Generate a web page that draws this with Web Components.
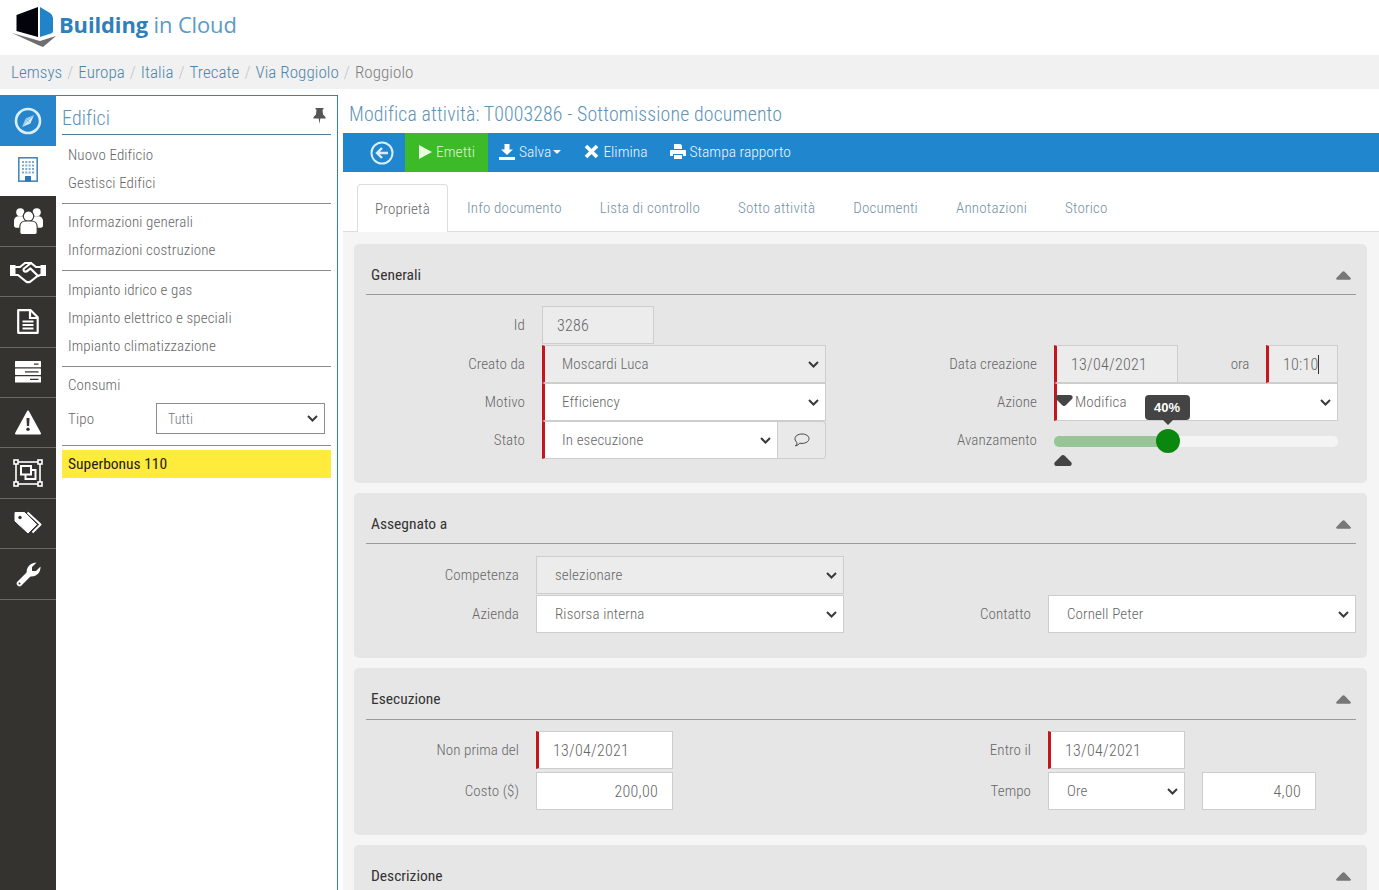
<!DOCTYPE html>
<html lang="it"><head><meta charset="utf-8"><title>Building in Cloud</title>
<style>
html,body{margin:0;padding:0;height:890px;overflow:hidden;background:#fff}
body{font-family:"Liberation Sans Narrow","Roboto Condensed","DejaVu Sans Condensed","Liberation Sans",sans-serif;font-size:15px;color:#666;font-weight:300}
</style></head><body>
<bic-header></bic-header>
<bic-breadcrumb></bic-breadcrumb>
<bic-shell>
  <bic-rail slot="rail"></bic-rail>
  <bic-panel slot="panel"></bic-panel>
  <div slot="main" style="display:contents">
    <bic-titlebar>Modifica attività: T0003286 - Sottomissione documento</bic-titlebar>
    <bic-toolbar></bic-toolbar>
    <bic-tabs></bic-tabs>
    <bic-content>
      <bic-card heading="Generali" bottom="24">
        <bic-form cols="188px 284px 228px 284px" rows="39px 38px 38px 38px">
          <bic-label>Id</bic-label>
          <bic-field ro num date style="width:112px">3286</bic-field>
          <div style="grid-column:3 / 5"></div>
          <bic-label>Creato da</bic-label>
          <bic-field ro req select>Moscardi Luca</bic-field>
          <bic-label>Data creazione</bic-label>
          <bic-timegroup></bic-timegroup>
          <bic-label>Motivo</bic-label>
          <bic-field req select>Efficiency</bic-field>
          <bic-label>Azione</bic-label>
          <bic-field req select pin>Modifica</bic-field>
          <bic-label>Stato</bic-label>
          <bic-statefield></bic-statefield>
          <bic-label>Avanzamento</bic-label>
          <bic-slider value="40"></bic-slider>
        </bic-form>
      </bic-card>
      <bic-card heading="Assegnato a" bottom="25" gap="12">
        <bic-form cols="182px 308px 204px 308px" rows="39px 38px">
          <bic-label>Competenza</bic-label>
          <bic-field ro select>selezionare</bic-field>
          <div style="grid-column:3 / 5"></div>
          <bic-label>Azienda</bic-label>
          <bic-field select>Risorsa interna</bic-field>
          <bic-label>Contatto</bic-label>
          <bic-field select>Cornell Peter</bic-field>
        </bic-form>
      </bic-card>
      <bic-card heading="Esecuzione" bottom="25" head="52">
        <bic-form cols="182px 137px 375px 137px 17px 114px" rows="41px 38px">
          <bic-label>Non prima del</bic-label>
          <bic-field req num date>13/04/2021</bic-field>
          <bic-label>Entro il</bic-label>
          <bic-field req num date>13/04/2021</bic-field>
          <div style="grid-column:5 / 7"></div>
          <bic-label>Costo ($)</bic-label>
          <bic-field right num>200,00</bic-field>
          <bic-label>Tempo</bic-label>
          <bic-field select>Ore</bic-field>
          <div></div>
          <bic-field right num>4,00</bic-field>
        </bic-form>
      </bic-card>
      <bic-card heading="Descrizione" bottom="25"></bic-card>
    </bic-content>
  </div>
</bic-shell>
<script>
const def=(name,html)=>{
  customElements.define(name,class extends HTMLElement{
    connectedCallback(){
      if(this.shadowRoot)return;
      const r=this.attachShadow({mode:'open'});
      r.innerHTML=typeof html==='function'?html(this):html;
    }
  });
};
const chev=`<svg width="11" height="7" viewBox="0 0 11 7" fill="none" stroke="#3a3a3a" stroke-width="2"><path d="M1 1l4.500 4.500L10 1"/></svg>`;

def('bic-header',`<style>
:host{display:flex;align-items:flex-start;height:55px;background:#fff}
svg{margin:5px 0 0 12px;flex:none}
.t{margin:11px 0 0 1px;font:400 21.900px/27px "Open Sans",sans-serif;color:#5a9ac4;letter-spacing:-.1px}
b{font-weight:700;color:#2f80b8}
</style>
<svg width="46" height="43" viewBox="12 5 46 43">
<path d="M12 33L40 41 56 36 43 47 38 45z" fill="#6e6e6e"/>
<path d="M16.500 15L38 7V37L16.500 31z" fill="#03030c"/>
<path d="M40 7L50 13Q53 15 53 18V31Q53 33 51 33.500L40 37z" fill="#2283c8"/>
</svg>
<div class="t"><b>Building</b> in Cloud</div>`);

def('bic-breadcrumb',`<style>
:host{display:flex;align-items:center;height:34px;background:#f1f1f1;padding-left:11px;font-size:17px;color:#4f86a8;box-sizing:border-box;letter-spacing:.05px}
i{font-style:normal;color:#c4c4c4;margin:0 5px}
span.l{color:#7d7d7d}
</style><span>Lemsys</span><i>/</i><span>Europa</span><i>/</i><span>Italia</span><i>/</i><span>Trecate</span><i>/</i><span>Via Roggiolo</span><i>/</i><span class="l">Roggiolo</span>`);

def('bic-shell',`<style>
:host{display:flex;height:795px;margin-top:6px;overflow:hidden}
.main{flex:1;min-width:0;margin-left:5px;display:flex;flex-direction:column}
</style><slot name="rail"></slot><slot name="panel"></slot><div class="main"><slot name="main"></slot></div>`);

const I={
compass:`<svg width="28" height="28" viewBox="0 0 28 28"><circle cx="14" cy="14" r="12" fill="none" stroke="#d9eefa" stroke-width="2.600"/><path d="M20 8l-3.600 8.400L14 14z" fill="#d9eefa"/><path d="M8 20l3.600-8.400L14 14z" fill="#9fd0ee"/><path d="M20 8l-8.400 3.600L14 14z" fill="#9fd0ee"/><path d="M8 20l8.400-3.600L14 14z" fill="#d9eefa"/></svg>`,
building:`<svg style="margin-top:-4px" width="20" height="25" viewBox="0 0 20 25"><rect x=".8" y=".8" width="18.400" height="23.400" fill="#fff" stroke="#4a87bb" stroke-width="1.600"/><g fill="#7fa9cf"><path d="M4 4h2v2H4zM7.300 4h2v2h-2zM10.600 4h2v2h-2zM14 4h2v2h-2zM4 7.500h2v2H4zM7.300 7.500h2v2h-2zM10.600 7.500h2v2h-2zM14 7.500h2v2h-2zM4 11h2v2H4zM7.300 11h2v2h-2zM10.600 11h2v2h-2zM14 11h2v2h-2zM4 14.500h2v2H4zM7.300 14.500h2v2h-2zM10.600 14.500h2v2h-2zM14 14.500h2v2h-2z"/></g><rect x="7" y="19" width="6" height="5.500" fill="#2f78b4"/></svg>`,
users:`<svg width="29" height="28" viewBox="0 0 30 28" fill="#fff"><circle cx="6.500" cy="5" r="4.200"/><circle cx="23.500" cy="5" r="4.200"/><path d="M0 19v-5c0-3 2-5 5-5h4l3 3-3 9H2c-1 0-2-1-2-2zM30 19v-5c0-3-2-5-5-5h-4l-3 3 3 9h7c1 0 2-1 2-2z"/><circle cx="15" cy="9" r="5.400" stroke="#34332f" stroke-width="1.200"/><path d="M6 26v-6c0-4 3-6 6-6h6c3 0 6 2 6 6v6c0 1.200-1 2-2 2H8c-1 0-2-.8-2-2z" stroke="#34332f" stroke-width="1.200"/></svg>`,
hands:`<svg width="36" height="25" viewBox="0 0 36 25"><rect x="0" y="6" width="5.500" height="11" fill="#fff"/><rect x="30.500" y="6" width="5.500" height="11" fill="#fff"/><g fill="none" stroke="#fff" stroke-width="2.200" stroke-linejoin="round" stroke-linecap="round"><path d="M5 8h5l5-4h6l5 4h5"/><path d="M5 16h3l8 6.500c1.600 1 3 1 4.500 0l7-5.500 3-1"/><path d="M21 4l-7 5.500c-1.200 1.700 0 3.500 2.500 3l4-3 7.500 7.500"/></g></svg>`,
doc:`<svg width="22" height="25" viewBox="0 0 22 25" fill="none" stroke="#fff" stroke-width="2.200"><path d="M1.200 1.200h12.500l7 7v15.600H1.200z" stroke-linejoin="round"/><path d="M13 1.500V9h7.500"/><path d="M5.500 12.500h11M5.500 16h11M5.500 19.500h11" stroke-width="2"/></svg>`,
server:`<svg width="26" height="22" viewBox="0 0 26 22"><g fill="#fff"><rect width="26" height="6.300" rx=".6"/><rect y="7.600" width="26" height="6.300" rx=".6"/><rect y="15.200" width="26" height="6.300" rx=".6"/></g><g stroke="#34332f" stroke-width="1.300"><path d="M19 3.200h4.500M10 10.800h13.500M15 18.300h8.500"/></g></svg>`,
warn:`<svg width="26" height="25" viewBox="0 0 26 25"><path d="M13 1.500L25 23.500H1z" fill="#fff" stroke="#fff" stroke-width="2" stroke-linejoin="round"/><path d="M11.500 8h3l-.4 8h-2.200z" fill="#34332f"/><circle cx="13" cy="19.300" r="1.700" fill="#34332f"/></svg>`,
group:`<svg width="30" height="28" viewBox="0 0 30 28" fill="none" stroke="#fff"><rect x="3" y="3" width="24" height="22" stroke-width="1.600"/><g fill="#34332f" stroke-width="1.600"><rect x="1" y="1" width="4" height="4"/><rect x="25" y="1" width="4" height="4"/><rect x="1" y="23" width="4" height="4"/><rect x="25" y="23" width="4" height="4"/></g><rect x="8" y="7" width="10" height="8.500" stroke-width="2"/><path d="M18 11h4.500v9h-10v-4.500" stroke-width="2"/></svg>`,
tags:`<svg width="28" height="24" viewBox="0 0 28 24"><path d="M1 1.500h9.500L22.500 13.500 14 22 1 10z" fill="#fff" stroke="#fff" stroke-linejoin="round"/><circle cx="6" cy="6.500" r="1.700" fill="#34332f"/><path d="M13.500 1.500l13 12-8 8" fill="none" stroke="#fff" stroke-width="2" stroke-linejoin="round"/></svg>`,
wrench:`<svg width="25" height="26" viewBox="0 0 25 26"><path d="M3.500 22.500L13 13" stroke="#fff" stroke-width="5.500" stroke-linecap="round"/><path d="M11.500 14.500C9 9.500 12 2 20.500 1.500l-4.500 4.500v4h4l4.500-4.500C25 13 18 17.500 11.500 14.500z" fill="#fff"/><circle cx="3.500" cy="22.500" r="1" fill="#34332f"/></svg>`
};
def('bic-rail',()=>`<style>
:host{display:flex;flex-direction:column;width:56px;flex:none;background:#34332f}
.i{height:50.400px;box-sizing:border-box;display:flex;align-items:center;justify-content:center;border-bottom:1px solid #6a6a66;flex:none}
.i.a{background:#2685cb;border:0;height:51px}
.i.w{background:#fff;border:0}
</style>
<div class="i a">${I.compass}</div><div class="i w">${I.building}</div>
${['users','hands','doc','server','warn','group','tags','wrench'].map(k=>`<div class="i">${I[k]}</div>`).join('')}`);

def('bic-panel',`<style>
:host{display:block;width:282px;flex:none;box-sizing:border-box;border-top:1px solid #2d82bb;border-right:1.500px solid #2d82bb;padding:0 6px;background:#fff;letter-spacing:.12px}
.h{display:flex;justify-content:space-between;height:39px;box-sizing:border-box;border-bottom:1px solid #4d7d96;font-size:20px;color:#5d93b6;line-height:44px}
.h svg{margin-top:12px;margin-right:5px}
section{border-bottom:1px solid #8b8b8b;padding:6px 0;margin:0}
section>div{height:28px;line-height:28px;padding-left:6px;color:#666}
section>.tipo{display:flex;align-items:center;padding:0 6px;height:39px;line-height:normal;margin-bottom:7px}
.tipo>span{width:88px}
.sel{width:169px;height:31px;box-sizing:border-box;border:1px solid #8d8d8d;display:flex;align-items:center;justify-content:space-between;padding:0 6px 0 11px;font-size:14px;color:#777}
.y{background:#ffeb3b;height:28px;line-height:28px;margin-top:4px;padding-left:6px;color:#222;font-size:15.500px;font-weight:400;letter-spacing:0}
</style>
<div class="h"><span>Edifici</span><svg width="13" height="16" viewBox="0 0 13 16" fill="#555"><path d="M2.500 0h8v1.500h-1l.5 5 2.500 2.500v1.500H7.300L6.500 16l-.8-5.500H.5V9L3 6.500l.5-5h-1z"/></svg></div>
<section><div>Nuovo Edificio</div><div>Gestisci Edifici</div></section>
<section style="padding-top:4px"><div>Informazioni generali</div><div>Informazioni costruzione</div></section>
<section style="padding-top:5px"><div>Impianto idrico e gas</div><div>Impianto elettrico e speciali</div><div>Impianto climatizzazione</div></section>
<section style="padding:4px 0 0"><div>Consumi</div><div class="tipo"><span>Tipo</span><div class="sel"><span>Tutti</span>${chev}</div></div></section>
<div class="y">Superbonus 110</div>`);

def('bic-titlebar',`<style>:host{display:block;height:38px;box-sizing:border-box;padding-left:6px;font-size:19.800px;line-height:40px;color:#5d93b6;letter-spacing:.15px}</style><slot></slot>`);

def('bic-toolbar',`<style>
:host{display:flex;align-items:stretch;height:39px;background:#2087cf;color:#fff;font-size:15.500px;flex:none}
.b{display:flex;align-items:center;gap:4px;color:#eef7fd;box-sizing:border-box;padding-bottom:2px}
.back{width:62px;justify-content:center;padding:0 0 0 16px}
.em{background:#3cba27;color:#def7cf;width:83px;padding-left:14px}
.sv{margin-left:11px}.el{margin-left:23px}.pr{margin-left:22px}
.car{width:0;height:0;border:4.500px solid transparent;border-top-color:#eef7fd;border-bottom:0;margin-left:-2px}
</style>
<div class="b back"><svg width="24" height="24" viewBox="0 0 24 24" fill="none" stroke="#d9eefa" stroke-width="2"><circle cx="12" cy="12" r="10.500"/><path d="M18 12H7.500M12 7l-5 5 5 5" stroke-width="2.400"/></svg></div>
<div class="b em"><svg width="13" height="14" viewBox="0 0 13 14" fill="#eafbe0"><path d="M0 0l13 7-13 7z"/></svg>Emetti</div>
<div class="b sv"><svg width="16" height="16" viewBox="0 0 16 16" fill="#fff"><path d="M5.500 0h5v5.500H14L8 11 2 5.500h3.500zM0 13h16v3H0z"/></svg>Salva<i class="car"></i></div>
<div class="b el"><svg width="15" height="15" viewBox="0 0 15 15" fill="none" stroke="#fff" stroke-width="3.600"><path d="M2 2l11 11M13 2L2 13"/></svg>Elimina</div>
<div class="b pr"><svg width="16" height="15" viewBox="0 0 16 15" fill="#fff"><path d="M4 0h6.500L12 1.500V5H4zM1 6h14c.6 0 1 .4 1 1v5h-3v-2H3v2H0V7c0-.6.400-1 1-1zM4 11h8v4H4z"/></svg>Stampa rapporto</div>`);

def('bic-tabs',`<style>
:host{display:flex;height:60px;box-sizing:border-box;padding:12px 0 0 14px;border-bottom:1px solid #ddd;flex:none;background:#fff}
a{display:block;height:48px;line-height:49px;padding:0 19px;color:#7491a3;box-sizing:border-box;letter-spacing:.2px}
a.on{color:#666;background:#fff;border:1px solid #ddd;border-bottom:0;border-radius:4px 4px 0 0;padding:0 17px;margin-bottom:-1px}
</style><a class="on">Proprietà</a><a>Info documento</a><a>Lista di controllo</a><a>Sotto attività</a><a>Documenti</a><a>Annotazioni</a><a>Storico</a>`);

def('bic-content',`<style>:host{display:flex;flex-direction:column;gap:10px;flex:1;min-height:0;background:#f5f5f5;padding:12px 12px 0 11px}</style><slot></slot>`);

def('bic-card',el=>`<style>
:host{display:block;background:#e6e6e6;border-radius:5px;flex:none;padding:0 11px ${el.getAttribute('bottom')}px 12px}
.h{display:flex;justify-content:space-between;align-items:center;height:${el.getAttribute('head')||51}px;box-sizing:border-box;border-bottom:1px solid #9a9a9a;padding:11px 5px 0 5px;color:#333;font-size:15.500px;font-weight:400}
.h svg{margin-top:1px}
.b{padding-top:${el.getAttribute('gap')||11}px}
</style>
<div class="h"><span>${el.getAttribute('heading')}</span><svg width="15" height="9" viewBox="0 0 15 9" fill="#777"><path d="M6.300 .8c.6-.7 1.800-.7 2.400 0l5.900 6.300c.6.700.2 1.600-.8 1.600H1.200C.2 8.700-.2 7.800.4 7.100z"/></svg></div>
<div class="b"><slot></slot></div>`);

def('bic-form',el=>`<style>
:host{display:grid;margin-left:-12px;grid-template-columns:${el.getAttribute('cols')};grid-auto-rows:38px;grid-template-rows:${el.getAttribute('rows')}}
</style><slot></slot>`);

def('bic-label',`<style>
:host{display:flex;align-items:center;justify-content:flex-end;padding-right:17px;box-sizing:border-box;color:#666;height:38px;white-space:nowrap;letter-spacing:.08px}
</style><slot></slot>`);

def('bic-field',el=>{
  const has=a=>el.hasAttribute(a);
  const sel=has('select'),ro=has('ro'),req=has('req'),right=has('right'),pin=has('pin');
  const pl=pin?18:has('date')?14:req?17:18;
  return `<style>
:host{display:block;height:38px;position:relative;box-sizing:border-box}
.f{height:100%;box-sizing:border-box;background:${ro?'#ececec':'#fff'};border:1px solid #cdcdcd;display:flex;align-items:center;justify-content:space-between;padding:0 ${right?14:sel?6:10}px 0 ${pl}px;font-size:${has('num')?16:15}px;color:#666;letter-spacing:${has('num')?.25:.12}px;${req?'border-left:3px solid #c4161c;':''}}
.t{flex:1;${right?'text-align:right;':''}white-space:nowrap}
.pin{position:absolute;left:1px;top:12px}
</style>
<div class="f"><span class="t"><slot></slot></span>${sel?chev:''}</div>
${pin?`<svg class="pin" width="18" height="11" viewBox="0 0 18 11" fill="#444"><path d="M3 0h12c2.500 0 3.500 2.500 2 4L11 10c-1.200 1.200-2.800 1.200-4 0L1 4C-.5 2.500.5 0 3 0z"/></svg>`:''}`;
});

def('bic-timegroup',`<style>
:host{display:flex;height:38px;box-sizing:border-box;border-bottom:1px solid #d0d0d0}
.d,.o{height:38px;box-sizing:border-box;background:#ececec;border:1px solid #cdcdcd;border-left:3px solid #c4161c;display:flex;align-items:center;font-size:16px;color:#666;letter-spacing:.25px}
.d{width:124px;padding-left:14px}
.m{width:88px;display:flex;align-items:center;justify-content:center;color:#666}
.m span{margin-left:36px}
.o{width:72px;padding-left:14px}
.o i{display:inline-block;width:1px;height:19px;background:#333;margin-left:-1px}
</style><div class="d">13/04/2021</div><div class="m"><span>ora</span></div><div class="o">10:10<i></i></div>`);

def('bic-statefield',`<style>
:host{display:flex;height:38px;box-sizing:border-box}
.s{width:236px;box-sizing:border-box;background:#fff;border:1px solid #cdcdcd;border-left:3px solid #c4161c;display:flex;align-items:center;justify-content:space-between;padding:0 6px 0 17px;font-size:15px;color:#666;letter-spacing:.12px}
.b{width:48px;box-sizing:border-box;background:#e9e9e9;border:1px solid #cdcdcd;border-left:0;border-radius:0 4px 4px 0;display:flex;align-items:center;justify-content:center}
</style><div class="s"><span>In esecuzione</span>${chev}</div><div class="b"><svg width="16" height="14" viewBox="0 0 16 14" fill="none" stroke="#444" stroke-width="1"><path d="M8 1c3.900 0 7 2 7 4.700S11.900 10.400 8 10.400c-.8 0-1.500-.1-2.200-.2C4.800 11.500 3.300 12.500 1.500 13c1-1 1.500-2 1.600-3.400C1.800 8.700 1 7.300 1 5.700 1 3 4.100 1 8 1z"/></svg></div>`);

def('bic-slider',el=>{
  const v=+el.getAttribute('value');
  return `<style>
:host{display:block;position:relative;height:38px}
.track{position:absolute;left:0;right:0;top:15px;height:11px;border-radius:5px;background:#f4f4f4}
.fill{height:100%;width:${v}%;border-radius:5px 0 0 5px;background:#97c597}
.knob{position:absolute;left:${v}%;top:8px;width:24px;height:24px;margin-left:-12px;border-radius:50%;background:#0a870f}
.tip{position:absolute;left:${v}%;top:-26px;margin-left:-23px;width:45px;height:25px;border-radius:4px;background:#444;color:#fff;font:700 13px/25px "Liberation Sans",sans-serif;text-align:center}
.tip::after{content:"";position:absolute;left:18px;bottom:-5px;border:5px solid transparent;border-top-color:#444;border-bottom:0}
.low{position:absolute;left:0;top:33px}
</style>
<div class="track"><div class="fill"></div></div><div class="knob"></div><div class="tip">${v}%</div>
<svg class="low" width="18" height="12" viewBox="0 0 18 12" fill="#444"><path d="M3 12h12c2.500 0 3.500-2.500 2-4L11 2C9.800.8 8.200.8 7 2L1 8c-1.500 1.500-.5 4 2 4z"/></svg>`;
});
</script>
</body></html>
